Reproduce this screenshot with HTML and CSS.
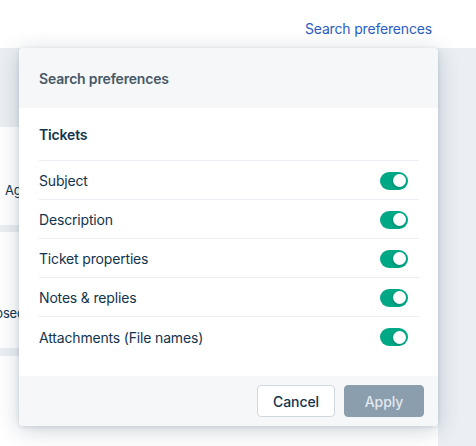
FILE: index.html
```html
<!DOCTYPE html>
<html>
<head>
<meta charset="utf-8">
<link rel="stylesheet" href="styles.css">
</head>
<body>
<header class="topbar">
  <a class="topbar-link">Search preferences</a>
</header>
<main class="main">
  <div class="side">
    <div class="gap-top"></div>
    <div class="card card-a"><span class="card-text">Agent</span></div>
    <div class="card card-b"><span class="card-text card-text-b">Closed</span></div>
    <div class="card card-c"></div>
  </div>
</main>
<section class="popover">
  <div class="pop-head">Search preferences</div>
  <div class="pop-body">
    <div class="group-title">Tickets</div>
    <ul class="rows">
      <li class="row"><span>Subject</span><span class="toggle"><span class="knob"></span></span></li>
      <li class="row"><span>Description</span><span class="toggle"><span class="knob"></span></span></li>
      <li class="row"><span>Ticket properties</span><span class="toggle"><span class="knob"></span></span></li>
      <li class="row"><span>Notes &amp; replies</span><span class="toggle"><span class="knob"></span></span></li>
      <li class="row"><span>Attachments (File names)</span><span class="toggle"><span class="knob"></span></span></li>
    </ul>
  </div>
  <div class="pop-foot">
    <button class="btn btn-cancel">Cancel</button>
    <button class="btn btn-apply">Apply</button>
  </div>
</section>
</body>
</html>
```

FILE: styles.css
```css
* { box-sizing: border-box; }
html, body { margin: 0; padding: 0; }
body {
  width: 476px;
  height: 446px;
  overflow: hidden;
  font-family: Inter, "Noto Sans", sans-serif;
  letter-spacing: -0.17px;
  color: #12344d;
  background: #ebeff3;
  position: relative;
}
.topbar {
  height: 48px;
  background: #ffffff;
  display: flex;
  align-items: center;
  justify-content: flex-end;
  padding-right: 44px;
}
.topbar-link {
  color: #2c5cc5;
  font-size: 14px;
  margin-top: 9px;
}
.main {
  height: 398px;
  display: flex;
}
.side {
  width: 438px;
  display: flex;
  flex-direction: column;
}
.gap-top { height: 79px; }
.card {
  background: #ffffff;
  display: flex;
  align-items: center;
  overflow: hidden;
  white-space: nowrap;
  font-size: 13px;
}
.card-a { height: 98px; margin-bottom: 7px; padding-top: 28px; padding-left: 5px; }
.card-b { height: 116px; margin-bottom: 8px; padding-top: 46px; padding-left: 1px; }
.card-text-b { margin-left: -18px; }
.card-c { flex: 1; }

.popover {
  position: absolute;
  top: 48px;
  left: 19px;
  width: 419px;
  height: 378px;
  background: #ffffff;
  border-radius: 4px;
  box-shadow: 0 4px 22px rgba(18, 52, 77, 0.22), 0 1px 4px rgba(18, 52, 77, 0.12);
  display: flex;
  flex-direction: column;
  overflow: hidden;
}
.pop-head {
  height: 60px;
  background: #f5f7f9;
  display: flex;
  align-items: center;
  padding-left: 20px;
  font-size: 14px;
  font-weight: 600;
  color: #475867;
}
.pop-body {
  flex: 1;
  padding: 0 19px 0 20px;
}
.group-title {
  height: 53px;
  display: flex;
  align-items: center;
  padding-top: 1px;
  font-size: 14px;
  font-weight: 600;
  color: #12344d;
  border-bottom: 1px solid #ebeff3;
}
.rows {
  list-style: none;
  margin: 0;
  padding: 0;
}
.row {
  height: 39px;
  display: flex;
  align-items: center;
  justify-content: space-between;
  padding-right: 11px;
  padding-top: 1px;
  font-size: 14px;
  color: #12344d;
  border-bottom: 1px solid #ebeff3;
}
.row:last-child { border-bottom: none; }
.toggle {
  width: 28px;
  height: 18px;
  border-radius: 9px;
  background: #00a886;
  display: flex;
  align-items: center;
  justify-content: flex-end;
  padding-right: 2px;
}
.knob {
  width: 13px;
  height: 13px;
  border-radius: 50%;
  background: #ffffff;
  box-shadow: -1px 1px 2px rgba(0, 0, 0, 0.2);
}
.pop-foot {
  height: 50px;
  background: #f5f7f9;
  display: flex;
  align-items: center;
  justify-content: flex-end;
  gap: 9px;
  padding-right: 14px;
}
.btn {
  height: 32px;
  border-radius: 4px;
  font-family: Inter, "Noto Sans", sans-serif;
  letter-spacing: -0.1px;
  font-size: 14px;
  font-weight: 500;
  padding-bottom: 1px;
}
.btn-cancel {
  width: 78px;
  background: #ffffff;
  border: 1px solid #cfd7df;
  color: #12344d;
}
.btn-apply {
  width: 80px;
  background: #8a9eae;
  border: 1px solid #8a9eae;
  color: #e3e8ec;
}
```
